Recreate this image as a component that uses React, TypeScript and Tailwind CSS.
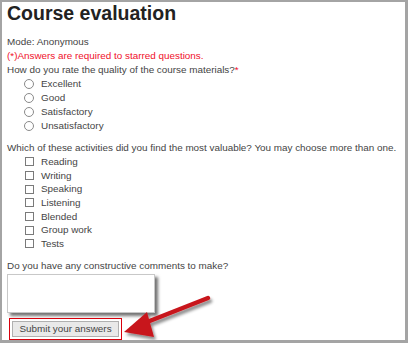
import React from 'react';

const ratings = ['Excellent', 'Good', 'Satisfactory', 'Unsatisfactory'];
const activities = ['Reading', 'Writing', 'Speaking', 'Listening', 'Blended', 'Group work', 'Tests'];

const App: React.FC = () => {
  return (
    <div className="w-[408px] h-[343px] bg-white border-l-2 border-t-2 border-r-[3px] border-b-[3px] border-[#a4a4a4] relative overflow-hidden font-['Liberation_Sans',Arial,sans-serif] text-[#444]">
      <div className="pl-[5px]">
        {/* Title */}
        <h1 className="text-[19.5px] leading-[22px] font-bold text-[#222] mb-[11px]">Course evaluation</h1>

        <div className="text-[9.9px] leading-[14px]">
          <p>Mode: Anonymous</p>
          <p className="text-[#f0102a]">(*)Answers are required to starred questions.</p>
          <p>
            How do you rate the quality of the course materials?<span className="text-[#f0102a]">*</span>
          </p>
          <div className="pl-[17px]">
            {ratings.map((r) => (
              <label key={r} className="flex items-center h-[14px]">
                <span className="w-[10px] h-[10px] rounded-full border border-[#8a8a8a] bg-white mr-[7px]" />
                {r}
              </label>
            ))}
          </div>

          <p className="mt-[8px]">Which of these activities did you find the most valuable? You may choose more than one.</p>
          <div className="pl-[18px]">
            {activities.map((a) => (
              <label key={a} className="flex items-center h-[13.7px]">
                <span className="w-[9px] h-[9px] border border-[#7a7a7a] bg-white mr-[7px]" />
                {a}
              </label>
            ))}
          </div>

          <p className="mt-[8px]">Do you have any constructive comments to make?</p>
          <div className="mt-[1px] w-[148px] h-[39px] border border-[#c8c8c8] bg-white shadow-[3px_3px_3px_rgba(0,0,0,0.55)]" />

          <div className="mt-[5px] ml-[2px] w-[113px] h-[22px] border border-[#d8000c] p-[2px]">
            <button className="w-full h-full bg-[#e9e9e9] border border-[#b0b0b0] text-[9.9px] text-[#444] leading-none">
              Submit your answers
            </button>
          </div>
        </div>
      </div>

      {/* annotation arrow */}
      <svg className="absolute left-0 top-0" width="408" height="343" viewBox="0 0 408 343">
        <defs>
          <filter id="sh" x="-20%" y="-20%" width="140%" height="140%">
            <feDropShadow dx="2" dy="3" stdDeviation="1.5" floodColor="#000" floodOpacity="0.45" />
          </filter>
        </defs>
        <g filter="url(#sh)">
          <line x1="206" y1="296" x2="140" y2="322" stroke="#c8161c" strokeWidth="4.5" strokeLinecap="round" />
          <polygon points="122,330 145,310 152,335" fill="#c8161c" />
        </g>
      </svg>
    </div>
  );
};

export default App;
